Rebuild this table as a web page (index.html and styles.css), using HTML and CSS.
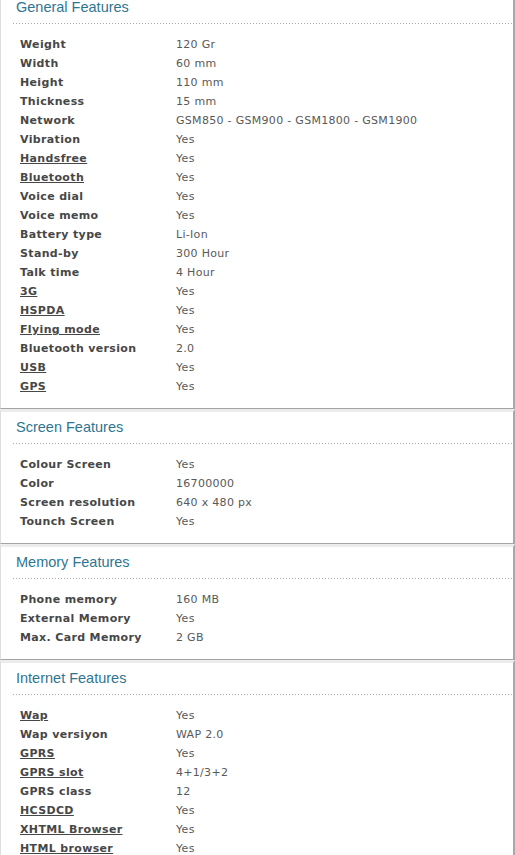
FILE: index.html
```html
<!DOCTYPE html>
<html>
<head>
<meta charset="utf-8">
<link rel="stylesheet" href="styles.css">
</head>
<body>
<div class="page">
  <section class="card">
    <h2 class="title">General Features</h2>
    <div class="dots"></div>
    <dl class="specs">
      <div class="row"><dt>Weight</dt><dd>120 Gr</dd></div>
      <div class="row"><dt>Width</dt><dd>60 mm</dd></div>
      <div class="row"><dt>Height</dt><dd>110 mm</dd></div>
      <div class="row"><dt>Thickness</dt><dd>15 mm</dd></div>
      <div class="row"><dt>Network</dt><dd>GSM850 - GSM900 - GSM1800 - GSM1900</dd></div>
      <div class="row"><dt>Vibration</dt><dd>Yes</dd></div>
      <div class="row"><dt><a class="link">Handsfree</a></dt><dd>Yes</dd></div>
      <div class="row"><dt><a class="link">Bluetooth</a></dt><dd>Yes</dd></div>
      <div class="row"><dt>Voice dial</dt><dd>Yes</dd></div>
      <div class="row"><dt>Voice memo</dt><dd>Yes</dd></div>
      <div class="row"><dt>Battery type</dt><dd>Li-Ion</dd></div>
      <div class="row"><dt>Stand-by</dt><dd>300 Hour</dd></div>
      <div class="row"><dt>Talk time</dt><dd>4 Hour</dd></div>
      <div class="row"><dt><a class="link">3G</a></dt><dd>Yes</dd></div>
      <div class="row"><dt><a class="link">HSPDA</a></dt><dd>Yes</dd></div>
      <div class="row"><dt><a class="link">Flying mode</a></dt><dd>Yes</dd></div>
      <div class="row"><dt>Bluetooth version</dt><dd>2.0</dd></div>
      <div class="row"><dt><a class="link">USB</a></dt><dd>Yes</dd></div>
      <div class="row"><dt><a class="link">GPS</a></dt><dd>Yes</dd></div>
    </dl>
  </section>
  <section class="card">
    <h2 class="title">Screen Features</h2>
    <div class="dots"></div>
    <dl class="specs">
      <div class="row"><dt>Colour Screen</dt><dd>Yes</dd></div>
      <div class="row"><dt>Color</dt><dd>16700000</dd></div>
      <div class="row"><dt>Screen resolution</dt><dd>640 x 480 px</dd></div>
      <div class="row"><dt>Tounch Screen</dt><dd>Yes</dd></div>
    </dl>
  </section>
  <section class="card">
    <h2 class="title">Memory Features</h2>
    <div class="dots"></div>
    <dl class="specs">
      <div class="row"><dt>Phone memory</dt><dd>160 MB</dd></div>
      <div class="row"><dt>External Memory</dt><dd>Yes</dd></div>
      <div class="row"><dt>Max. Card Memory</dt><dd>2 GB</dd></div>
    </dl>
  </section>
  <section class="card">
    <h2 class="title">Internet Features</h2>
    <div class="dots"></div>
    <dl class="specs">
      <div class="row"><dt><a class="link">Wap</a></dt><dd>Yes</dd></div>
      <div class="row"><dt>Wap versiyon</dt><dd>WAP 2.0</dd></div>
      <div class="row"><dt><a class="link">GPRS</a></dt><dd>Yes</dd></div>
      <div class="row"><dt><a class="link">GPRS slot</a></dt><dd>4+1/3+2</dd></div>
      <div class="row"><dt>GPRS class</dt><dd>12</dd></div>
      <div class="row"><dt><a class="link">HCSDCD</a></dt><dd>Yes</dd></div>
      <div class="row"><dt><a class="link">XHTML Browser</a></dt><dd>Yes</dd></div>
      <div class="row"><dt><a class="link">HTML browser</a></dt><dd>Yes</dd></div>
    </dl>
  </section>
</div>
</body>
</html>
```
FILE: styles.css
```css
html, body {
  margin: 0;
  padding: 0;
  background: #ffffff;
}
.page {
  width: 515px;
  margin-top: -8px;
  overflow: hidden;
}
.card {
  width: 512px;
  background: #ffffff;
  border-left: 1px solid #dedede;
  border-right: 2px solid #a8a8a8;
  border-bottom: 1px solid #a4a4a4;
  padding: 7px 0 12px 0;
}
.card + .card {
  border-top: 3px solid #ececec;
}
.title {
  margin: 0 0 7px 15px;
  font-family: "Liberation Sans", Arial, sans-serif;
  font-size: 14.5px;
  line-height: 17px;
  font-weight: normal;
  color: #2f7592;
}
.dots {
  height: 1px;
  margin-left: 12px;
  background-image: repeating-linear-gradient(to right, #a9a9a9 0 1px, transparent 1px 3px);
}
.specs {
  margin: 11px 0 0 19px;
  padding: 0;
  font-family: "DejaVu Sans", Verdana, sans-serif;
  font-size: 11px;
  line-height: 19px;
}
.row {
  display: flex;
}
.row dt {
  width: 156px;
  flex: none;
  font-weight: bold;
  color: #474747;
  letter-spacing: 0.35px;
}
.row dd {
  margin: 0;
  color: #595959;
  letter-spacing: 0.3px;
}
.link {
  text-decoration: underline;
  color: #474747;
}
```
